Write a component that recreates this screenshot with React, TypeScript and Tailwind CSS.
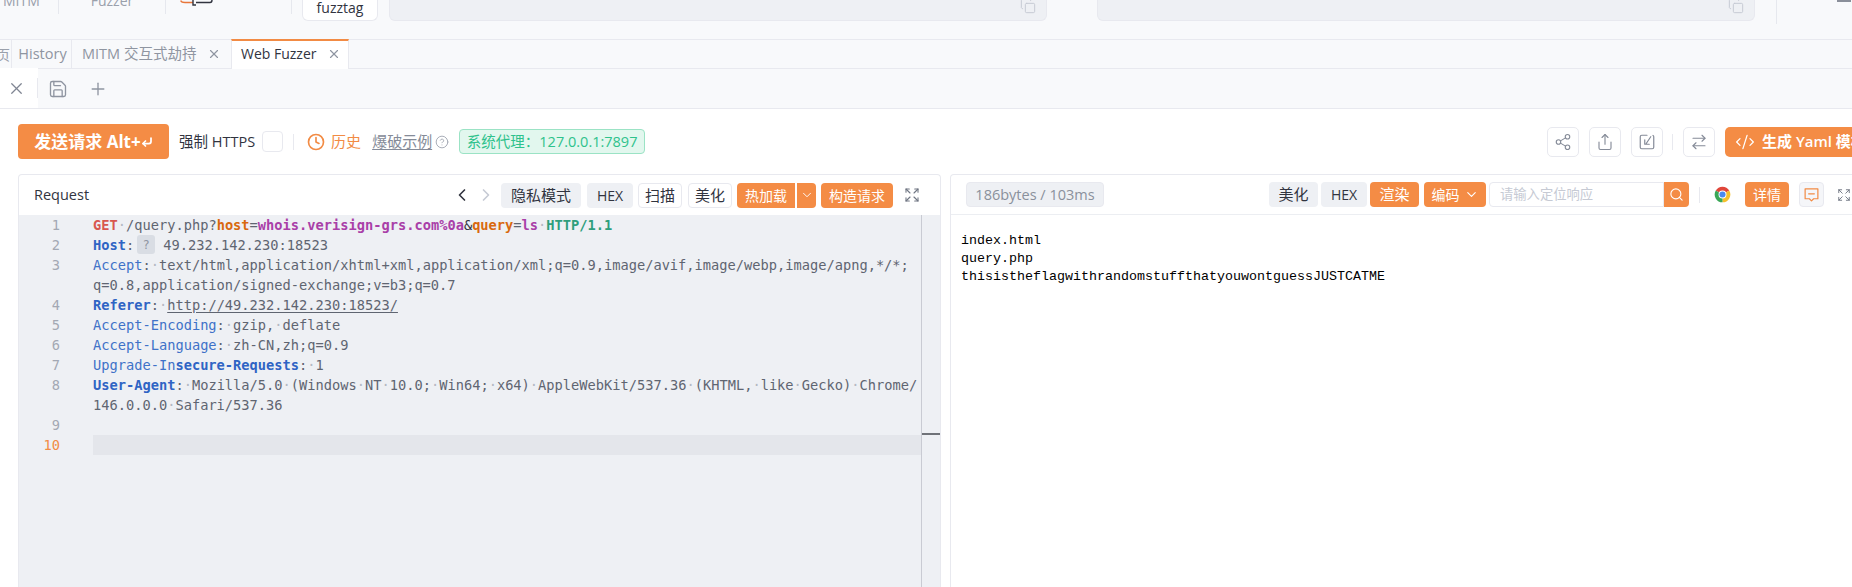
import { X, Plus, Save, Clock, CircleHelp, ChevronLeft, ChevronRight, ChevronDown, Expand, Share2, Share, ArrowRightLeft, CodeXml, Search, Copy, CornerDownLeft } from "lucide-react";
import type { ReactNode } from "react";

const B = ({ c, children }: { c: string; children: ReactNode }) => <span className={c}>{children}</span>;
const Dot = () => <span className="text-[#b4b8c2]">·</span>;
const KEY = "text-[#3f72c8]";
const KEYB = "text-[#2f64c4] font-bold";
const VAL = "text-[#5f6571]";

function Row({ n, active, children }: { n?: number; active?: boolean; children?: ReactNode }) {
  return (
    <div className="flex h-[20px] leading-[20px]">
      <div className={`w-[41px] flex-none text-right ${active ? "text-[#f28b44]" : "text-[#a3a8b3]"}`}>{n}</div>
      <div className="w-[33px] flex-none" />
      <div className={`flex-1 whitespace-pre ${active ? "bg-[#e4e6eb]" : ""} ${VAL}`}>{children}</div>
    </div>
  );
}

function Chrome() {
  return (
    <svg viewBox="0 0 24 24" className="w-[17px] h-[17px]">
      <path d="M12 12L2.47 6.5A11 11 0 0 1 21.53 6.5Z" fill="#e0463a" />
      <path d="M12 12L21.53 6.5A11 11 0 0 1 12 23Z" fill="#f6c02c" />
      <path d="M12 12L12 23A11 11 0 0 1 2.47 6.5Z" fill="#3aa757" />
      <circle cx="12" cy="12" r="5.6" fill="#fff" />
      <circle cx="12" cy="12" r="4.3" fill="#4a8af0" />
    </svg>
  );
}

export default function App() {
  return (
    <div className="w-[1852px] h-[587px] overflow-hidden bg-white text-[14px] text-[#31343f] font-['Open_Sans','Noto_Sans_CJK_SC',sans-serif]">
      {/* clipped top navigation */}
      <div className="h-[39px] bg-[#f8f9fb] flex items-start overflow-hidden">
        <div className="w-[58px] flex-none -mt-[9px] pl-[3px] text-[14px] leading-[20px] text-[#9aa0ab]">MITM</div>
        <div className="w-px h-[14px] bg-[#e6e8ee] flex-none" />
        <div className="w-[106px] flex-none -mt-[9px] text-center text-[14px] leading-[20px] text-[#9aa0ab]">Fuzzer</div>
        <div className="w-px h-[14px] bg-[#e6e8ee] flex-none" />
        <div className="w-[125px] flex-none pl-[14px]">
          <svg viewBox="0 0 34 6" className="w-[34px] h-[6px]">
            <path d="M1 0.5C1 2.5 3 2.5 5 2.5H13" fill="none" stroke="#e8763a" strokeWidth="1.6" />
            <path d="M13 0V5H16M16 2.5H30C31.5 2.5 32 1.5 32 0" fill="none" stroke="#31343f" strokeWidth="1.4" />
          </svg>
        </div>
        <div className="w-px h-[14px] bg-[#e6e8ee] flex-none" />
        <div className="ml-[10px] w-[76px] h-[21px] flex-none bg-white border border-t-0 border-[#e8e9ef] rounded-b-[6px] text-center text-[14px] font-medium leading-[15px] text-[#31343f]">fuzztag</div>
        <div className="ml-[11px] w-[658px] h-[21px] flex-none bg-[#eef0f4] border border-t-0 border-[#e8e9ef] rounded-b-[6px] flex justify-end pr-[10px]">
          <Copy className="w-[16px] h-[16px] -mt-[2px] text-[#c6cad4]" strokeWidth={1.5} />
        </div>
        <div className="ml-[50px] w-[658px] h-[21px] flex-none bg-[#eef0f4] border border-t-0 border-[#e8e9ef] rounded-b-[6px] flex justify-end pr-[10px]">
          <Copy className="w-[16px] h-[16px] -mt-[2px] text-[#c6cad4]" strokeWidth={1.5} />
        </div>
        <div className="ml-[21px] w-px h-[24px] bg-[#e6e8ee] flex-none" />
        <div className="ml-[60px] w-[14px] h-[2px] bg-[#8a8f9a] flex-none" />
      </div>

      {/* tab strip */}
      <div className="h-[30px] bg-[#f8f9fb] border-y border-[#e8e9ef] flex overflow-visible">
        <div className="w-[12px] flex-none border-r border-[#e8e9ef] overflow-hidden flex items-center justify-end pr-[1px] text-[#9aa0ab]">页</div>
        <div className="w-[60px] flex-none border-r border-[#e8e9ef] flex items-center justify-center pl-[2px] text-[14.5px] text-[#8f95a1]">History</div>
        <div className="w-[159px] flex-none flex items-center pl-[10px] pb-[1px] text-[14.5px] text-[#8f95a1]">
          <span>MITM 交互式劫持</span>
          <X className="w-[14px] h-[14px] ml-[11px] text-[#8f95a1]" strokeWidth={2} />
        </div>
        <div className="w-[118px] h-[30px] -mt-px flex-none bg-white border-t-2 border-t-[#f28b44] border-x border-x-[#e8e9ef] flex items-center pl-[9px] pb-[3px] text-[14px] text-[#31343f]">
          <span>Web Fuzzer</span>
          <X className="w-[14px] h-[14px] ml-[10px] text-[#8f95a1]" strokeWidth={2} />
        </div>
      </div>

      {/* sub tab strip */}
      <div className="h-[40px] bg-[#f8f9fb] border-b border-[#e8e9ef] flex items-center">
        <div className="w-[38px] h-[40px] -mt-px flex-none bg-white flex items-center justify-start pl-[7px]">
          <X className="w-[19px] h-[19px] text-[#7f8592]" strokeWidth={1.6} />
          <div className="ml-[11px] w-px h-[20px] bg-[#e8e9ef]" />
        </div>
        <Save className="ml-[10px] w-[20px] h-[20px] text-[#8f95a1]" strokeWidth={1.6} />
        <Plus className="ml-[20px] w-[20px] h-[20px] text-[#8f95a1]" strokeWidth={1.6} />
      </div>

      <div className="w-[1880px]">
        {/* main toolbar */}
        <div className="h-[65px] flex items-center pl-[18px]">
          <div className="w-[151px] h-[35px] flex-none bg-[#f48c45] rounded-[4px] flex items-center justify-center text-[17px] font-bold text-white">
            <span>发送请求 Alt+</span>
            <CornerDownLeft className="w-[12px] h-[12px]" strokeWidth={3.5} />
          </div>
          <span className="ml-[10px] whitespace-nowrap text-[14.5px]">强制 HTTPS</span>
          <div className="ml-[7px] w-[21px] h-[21px] bg-white border border-[#e8e9ef] rounded-[4px]" />
          <div className="ml-[10px] w-px h-[16px] bg-[#e8e9ef]" />
          <Clock className="ml-[13px] w-[18px] h-[18px] text-[#f28b44]" strokeWidth={2.2} />
          <span className="ml-[6px] text-[15px] text-[#f28b44]">历史</span>
          <span className="ml-[11px] text-[15px] text-[#858b98] underline underline-offset-2">爆破示例</span>
          <CircleHelp className="ml-[3px] w-[14px] h-[14px] text-[#a3a8b3]" strokeWidth={1.6} />
          <div className="ml-[10px] w-[186px] h-[25px] flex-none bg-[#e2f7ee] border border-[#9be3c5] rounded-[4px] flex items-center justify-center whitespace-nowrap text-[14.5px] text-[#2fc28c]">系统代理：127.0.0.1:7897</div>

          <div className="ml-auto flex items-center pr-[20px]">
            <div className="w-[32px] h-[30px] border border-[#e8e9ef] rounded-[5px] flex items-center justify-center">
              <Share2 className="w-[18px] h-[18px] text-[#858b98]" strokeWidth={1.5} />
            </div>
            <div className="ml-[10px] w-[32px] h-[30px] border border-[#e8e9ef] rounded-[5px] flex items-center justify-center">
              <Share className="w-[18px] h-[18px] text-[#858b98]" strokeWidth={1.5} />
            </div>
            <div className="ml-[10px] w-[32px] h-[30px] border border-[#e8e9ef] rounded-[5px] flex items-center justify-center">
              <svg viewBox="0 0 24 24" className="w-[18px] h-[18px]" fill="none" stroke="#858b98" strokeWidth="1.6" strokeLinecap="round" strokeLinejoin="round">
                <path d="M12 3H5a2 2 0 0 0-2 2v14a2 2 0 0 0 2 2h14a2 2 0 0 0 2-2V5a2 2 0 0 0-1-1.7" />
                <path d="M17 5l-6 9M9 9v6h6" />
              </svg>
            </div>
            <div className="ml-[9px] w-px h-[16px] bg-[#e8e9ef]" />
            <div className="ml-[10px] w-[32px] h-[30px] border border-[#e8e9ef] rounded-[5px] flex items-center justify-center">
              <ArrowRightLeft className="w-[18px] h-[18px] text-[#858b98]" strokeWidth={1.5} />
            </div>
            <div className="ml-[10px] w-[135px] h-[30px] bg-[#f48c45] rounded-[5px] flex items-center pl-[10px] text-white text-[15px] font-semibold whitespace-nowrap">
              <CodeXml className="w-[20px] h-[20px] flex-none" strokeWidth={1.5} />
              <span className="ml-[7px]">生成 Yaml 模板</span>
            </div>
          </div>
        </div>

        {/* panels */}
        <div className="flex h-[413px] pl-[18px]">
          {/* request */}
          <div className="w-[923px] flex-none border border-b-0 border-[#e8e9ef] rounded-t-[4px] flex flex-col">
            <div className="h-[40px] flex-none flex items-center pl-[15px]">
              <span className="font-medium text-[14.5px] text-[#31343f]">Request</span>
              <ChevronLeft className="ml-auto w-[20px] h-[20px] text-[#31343f]" strokeWidth={2} />
              <ChevronRight className="ml-[4px] w-[20px] h-[20px] text-[#c6cad4]" strokeWidth={2} />
              <div className="ml-[5px] w-[80px] h-[25px] bg-[#eef0f4] rounded-[4px] flex items-center justify-center text-[15px]">隐私模式</div>
              <div className="ml-[6px] w-[46px] h-[25px] bg-[#eef0f4] rounded-[4px] flex items-center justify-center text-[14px]">HEX</div>
              <div className="ml-[5px] w-[44px] h-[25px] border border-[#e8e9ef] rounded-[4px] flex items-center justify-center text-[15px]">扫描</div>
              <div className="ml-[6px] w-[44px] h-[25px] border border-[#e8e9ef] rounded-[4px] flex items-center justify-center text-[15px]">美化</div>
              <div className="ml-[5px] w-[58px] h-[25px] bg-[#f48c45] rounded-l-[4px] flex items-center justify-center text-[14px] text-white">热加载</div>
              <div className="ml-[2px] w-[19px] h-[25px] bg-[#f48c45] rounded-r-[4px] flex items-center justify-center">
                <ChevronDown className="w-[14px] h-[14px] text-white" strokeWidth={1.6} />
              </div>
              <div className="ml-[5px] w-[72px] h-[25px] bg-[#f48c45] rounded-[4px] flex items-center justify-center text-[14px] text-white">构造请求</div>
              <Expand className="ml-[11px] mr-[20px] w-[16px] h-[16px] text-[#6f7582]" strokeWidth={1.6} />
            </div>
            <div className="flex-1 bg-[#eef0f4] flex font-['DejaVu_Sans_Mono',monospace] text-[13.7px]">
              <div className="w-[903px] flex-none border-r border-[#c9cbd3]">
                <Row n={1}>
                  <B c="text-[#d8574f] font-bold">GET</B><Dot />/query.php?<B c="text-[#d9690f] font-bold">host</B>=<B c="text-[#a93fa8] font-bold">whois.verisign-grs.com%0a</B><B c="text-[#31343f]">&amp;</B><B c="text-[#d9690f] font-bold">query</B>=<B c="text-[#a93fa8] font-bold">ls</B><Dot /><B c="text-[#2f9e7c] font-bold">HTTP/1.1</B>
                </Row>
                <Row n={2}>
                  <B c={KEYB}>Host</B>:
                  <span className="inline-block w-[18px] h-[19px] ml-[3px] mr-[8px] align-top bg-[#d9dde4] rounded-[3px] text-center text-[#8f95a1] text-[12px]">?</span>
                  49.232.142.230:18523
                </Row>
                <Row n={3}><B c={KEY}>Accept</B>:<Dot />text/html,application/xhtml+xml,application/xml;q=0.9,image/avif,image/webp,image/apng,*/*;</Row>
                <Row>q=0.8,application/signed-exchange;v=b3;q=0.7</Row>
                <Row n={4}><B c={KEYB}>Referer</B>:<Dot /><span className="underline underline-offset-2">http://49.232.142.230:18523/</span></Row>
                <Row n={5}><B c={KEY}>Accept-Encoding</B>:<Dot />gzip,<Dot />deflate</Row>
                <Row n={6}><B c={KEY}>Accept-Language</B>:<Dot />zh-CN,zh;q=0.9</Row>
                <Row n={7}><B c={KEY}>Upgrade-In</B><B c={KEYB}>secure-Requests</B>:<Dot />1</Row>
                <Row n={8}><B c={KEYB}>User-Agent</B>:<Dot />Mozilla/5.0<Dot />(Windows<Dot />NT<Dot />10.0;<Dot />Win64;<Dot />x64)<Dot />AppleWebKit/537.36<Dot />(KHTML,<Dot />like<Dot />Gecko)<Dot />Chrome/</Row>
                <Row>146.0.0.0<Dot />Safari/537.36</Row>
                <Row n={9} />
                <Row n={10} active />
              </div>
              <div className="flex-1 pt-[218px]">
                <div className="h-[2px] bg-[#6f7278]" />
              </div>
            </div>
          </div>

          {/* response */}
          <div className="ml-[9px] flex-1 border border-b-0 border-[#e8e9ef] rounded-t-[4px] flex flex-col">
            <div className="h-[40px] flex-none border-b border-[#eceef2] flex items-center pl-[15px] pr-[28px]">
              <div className="w-[138px] h-[25px] bg-[#eef0f4] border border-[#e8e9ef] rounded-[4px] flex items-center justify-center text-[14.5px] text-[#8a909c]">186bytes / 103ms</div>
              <div className="ml-auto w-[49px] h-[25px] bg-[#eef0f4] rounded-[4px] flex items-center justify-center text-[15px]">美化</div>
              <div className="ml-[3px] w-[46px] h-[25px] bg-[#eef0f4] rounded-[4px] flex items-center justify-center text-[14px]">HEX</div>
              <div className="ml-[3px] w-[49px] h-[25px] bg-[#f48c45] rounded-[4px] flex items-center justify-center text-[15px] text-white">渲染</div>
              <div className="ml-[5px] w-[62px] h-[25px] bg-[#f48c45] rounded-[4px] flex items-center justify-center text-[14px] text-white">
                编码<ChevronDown className="ml-[4px] w-[15px] h-[15px]" strokeWidth={1.8} />
              </div>
              <div className="ml-[3px] w-[175px] h-[25px] border border-[#e8e9ef] rounded-l-[4px] flex items-center pl-[10px] text-[13.3px] text-[#c6cad4]">请输入定位响应</div>
              <div className="w-[25px] h-[25px] bg-[#f48c45] rounded-r-[4px] flex items-center justify-center">
                <Search className="w-[15px] h-[15px] text-white" strokeWidth={1.8} />
              </div>
              <div className="ml-[10px] w-px h-[16px] bg-[#e8e9ef]" />
              <div className="ml-[14px]"><Chrome /></div>
              <div className="ml-[14px] w-[44px] h-[25px] bg-[#f48c45] rounded-[4px] flex items-center justify-center text-[14px] text-white">详情</div>
              <div className="ml-[10px] w-[25px] h-[25px] bg-[#f5f6f9] border border-[#e8e9ef] rounded-[4px] flex items-center justify-center">
                <svg viewBox="0 0 24 24" className="w-[17px] h-[17px]" fill="none" stroke="#f28b44" strokeWidth="1.7" strokeLinejoin="round" strokeLinecap="round">
                  <path d="M3 4h18v14h-6l-3 3-3-3H3z" />
                  <path d="M8 11h8" />
                </svg>
              </div>
              <Expand className="ml-[13px] w-[14px] h-[14px] text-[#6f7582]" strokeWidth={1.6} />
            </div>
            <div className="pl-[10px] pt-[17px] font-['Liberation_Mono',monospace] text-[13.33px] leading-[18px] text-black">
              <div>index.html</div>
              <div>query.php</div>
              <div>thisistheflagwithrandomstuffthatyouwontguessJUSTCATME</div>
            </div>
          </div>
        </div>
      </div>
    </div>
  );
}
